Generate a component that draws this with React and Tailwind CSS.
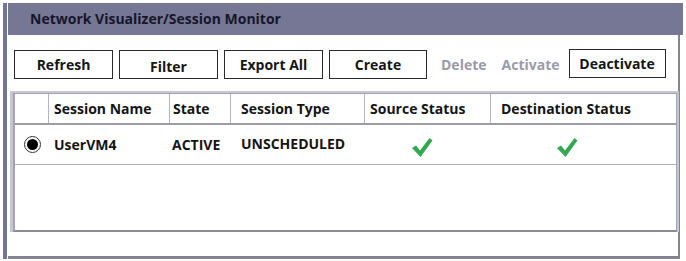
import { useState } from 'react';

const columns = [
  { key: 'radio', label: '', width: 'w-[34px]', pad: '' },
  { key: 'name', label: 'Session Name', width: 'w-[121px]', pad: 'pl-[5px]' },
  { key: 'state', label: 'State', width: 'w-[61px]', pad: 'pl-[3px]' },
  { key: 'type', label: 'Session Type', width: 'w-[134px]', pad: 'pl-[10px]' },
  { key: 'source', label: 'Source Status', width: 'w-[126px]', pad: 'pl-[5px]' },
  { key: 'dest', label: 'Destination Status', width: 'flex-1', pad: 'pl-[10px]' },
];

function Check() {
  return (
    <svg width="22" height="21" viewBox="0 0 22 21">
      <path
        d="M1 11 L5 8.5 L9 13.5 L18.5 1 L21.5 3.5 L9.5 20 Z"
        fill="#33a852"
      />
    </svg>
  );
}

function Button({ children, className = '' }) {
  return (
    <button
      className={`h-[29px] border-[1.5px] border-[#2a2a2a] bg-white text-[14px] font-bold text-[#151515] ${className}`}
    >
      {children}
    </button>
  );
}

export default function App() {
  const [selected, setSelected] = useState(true);

  return (
    <div
      className="w-[686px] h-[261px] bg-white pt-[3px] pl-[3px] flex"
      style={{ fontFamily: '"Open Sans", "Liberation Sans", sans-serif' }}
    >
      {/* left frame bar */}
      <div className="w-[4px] h-[256px] bg-[#74749a]"></div>

      <div className="ml-[1px] w-[675px] flex flex-col">
        <div className="h-[32px] bg-[#767695] flex items-center pl-[22px] pb-[1px]">
          <span className="text-[14px] font-bold text-[#16162a]">Network Visualizer/Session Monitor</span>
        </div>

        <div className="w-[672px] h-[224px] border-r-[2px] border-b-[3px] border-[#85858f] flex flex-col">
          {/* toolbar */}
          <div className="flex items-center pl-[6px] mt-[15px] h-[29px]">
            <Button className="w-[99px]">Refresh</Button>
            <Button className="w-[99px] ml-[6px] pt-[3px]">Filter</Button>
            <Button className="w-[99px] ml-[6px]">Export All</Button>
            <Button className="w-[98px] ml-[6px]">Create</Button>
            <span className="ml-[14px] text-[14px] font-bold text-[#9a9aaa]">Delete</span>
            <span className="ml-[15px] text-[14px] font-bold text-[#9a9aaa]">Activate</span>
            <Button className="w-[97px] ml-[9px] -mt-[2px]">Deactivate</Button>
          </div>

          {/* table */}
          <div className="ml-[2px] mt-[12px] w-[669px] h-[141px] border-t-[2px] border-l-[3px] border-r-[2px] border-[#c6c6d2]">
            <div className="h-full border-t border-l-[2px] border-r border-[#a4a4b0] border-b-[2px] border-b-[#8c8c94] flex flex-col">
              <div className="flex h-[31px] border-b-[2px] border-[#9c9cab]">
                {columns.map((c, i) => (
                  <div
                    key={c.key}
                    className={`${c.width} ${c.pad} flex items-center text-[14px] font-bold text-[#141414] ${i < columns.length - 1 ? 'border-r border-[#b4b4c2]' : ''}`}
                  >
                    {c.label}
                  </div>
                ))}
              </div>

              <div className="flex h-[40px] border-b border-[#b0b0b8] text-[14px] font-bold text-[#141414]">
                <div className="w-[34px] flex items-center justify-center">
                  <button
                    onClick={() => setSelected(!selected)}
                    className="w-[17px] h-[17px] rounded-full border-[1.5px] border-[#333] flex items-center justify-center bg-white"
                  >
                    {selected && <span className="w-[11px] h-[11px] rounded-full bg-black"></span>}
                  </button>
                </div>
                <div className="w-[121px] pl-[5px] flex items-center">UserVM4</div>
                <div className="w-[61px] pl-[2px] flex items-center">ACTIVE</div>
                <div className="w-[134px] pl-[10px] flex items-center -mt-[2px]">UNSCHEDULED</div>
                <div className="w-[126px] flex items-center justify-center pr-[12px] pt-[5px]">
                  <Check />
                </div>
                <div className="flex-1 flex items-center justify-center pr-[34px] pt-[5px]">
                  <Check />
                </div>
              </div>

              <div className="flex-1"></div>
            </div>
          </div>
        </div>
      </div>
    </div>
  );
}
